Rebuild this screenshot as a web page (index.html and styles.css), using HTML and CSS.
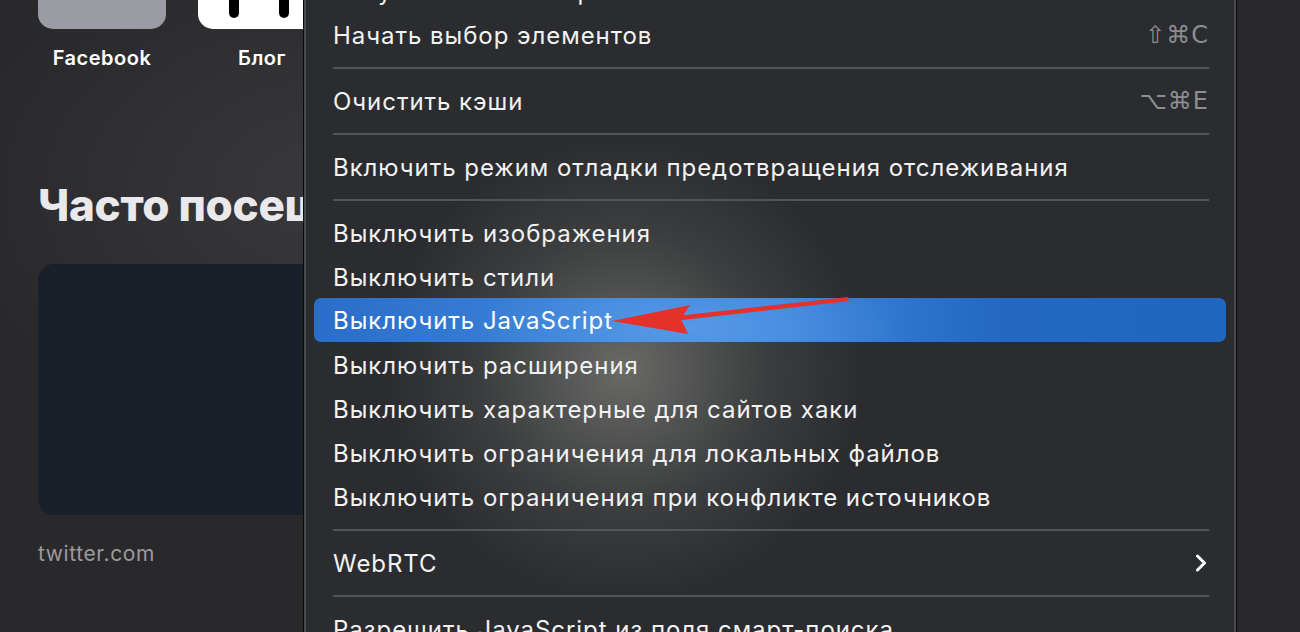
FILE: index.html
```html
<!DOCTYPE html>
<html lang="ru">
<head>
    <meta charset="UTF-8">
    <meta name="viewport" content="width=device-width, initial-scale=1.0">
    <title>Safari — Разработка</title>
    <link rel="stylesheet" href="styles.css">
</head>
<body>
    <main class="page">
        <div class="favorites">
            <div class="fav">
                <div class="tile tile-gray"></div>
                <div class="fav-label">Facebook</div>
            </div>
            <div class="fav">
                <div class="tile tile-white">
                    <span class="bar"></span>
                    <span class="bar"></span>
                </div>
                <div class="fav-label">Блог</div>
            </div>
        </div>

        <h1 class="section-title">Часто посещаемые</h1>

        <div class="frequent">
            <div class="site">
                <div class="site-card"></div>
                <div class="site-label">twitter.com</div>
            </div>
        </div>
    </main>

    <div class="menu">
        <div class="item">Запустить запись временной шкалы<span class="key">⌥⇧⌘T</span></div>
        <div class="item">Начать выбор элементов<span class="key">⇧⌘C</span></div>
        <div class="sep"></div>
        <div class="item">Очистить кэши<span class="key">⌥⌘E</span></div>
        <div class="sep"></div>
        <div class="item">Включить режим отладки предотвращения отслеживания</div>
        <div class="sep"></div>
        <div class="item">Выключить изображения</div>
        <div class="item">Выключить стили</div>
        <div class="item active">Выключить JavaScript</div>
        <div class="item">Выключить расширения</div>
        <div class="item">Выключить характерные для сайтов хаки</div>
        <div class="item">Выключить ограничения для локальных файлов</div>
        <div class="item">Выключить ограничения при конфликте источников</div>
        <div class="sep"></div>
        <div class="item">WebRTC
            <svg class="chevron" width="12" height="18" viewBox="0 0 12 18">
                <path d="M2.5 2 L9.5 9 L2.5 16" fill="none" stroke="#fff" stroke-width="3" stroke-linecap="round" stroke-linejoin="round"/>
            </svg>
        </div>
        <div class="sep"></div>
        <div class="item">Разрешить JavaScript из поля смарт-поиска</div>
    </div>

    <!-- annotation arrow drawn over the menu -->
    <svg class="arrow" width="260" height="50" viewBox="0 0 260 50">
        <path d="M238 2 L62 21.5 L64 26 L239 6 Z" fill="#e5312b"/>
        <path d="M2 26 L80 10 L71 24 L78 39 Z" fill="#e5312b"/>
    </svg>
</body>
</html>
```

FILE: styles.css
```css
html, body {
    margin: 0;
    height: 100%;
}

body {
    font-family: Inter, "Noto Sans", "DejaVu Sans", sans-serif;
    background:
        radial-gradient(ellipse 380px 260px at 330px 190px, rgba(70, 70, 74, 0.55), transparent),
        #29292c;
    color: #fff;
    overflow: hidden;
    position: relative;
}

.page {
    padding: 0 38px;
}

.favorites {
    display: flex;
    gap: 32px;
    margin-top: -100px;
}

.fav {
    width: 128px;
    display: flex;
    flex-direction: column;
    align-items: center;
}

.tile {
    width: 128px;
    height: 129px;
    border-radius: 15px;
}

.tile-gray {
    background: #9a9ba3;
}

.tile-white {
    background: #fff;
    display: flex;
    justify-content: center;
    gap: 40px;
    padding-right: 6px;
    box-sizing: border-box;
}

.bar {
    width: 10px;
    height: 118px;
    border-radius: 0 0 5px 5px;
    background: #000;
}

.fav-label {
    margin-top: 17px;
    font-size: 20px;
    font-weight: 600;
    letter-spacing: 0.5px;
}

.section-title {
    margin: 108px 0 0;
    width: 265px;
    overflow: hidden;
    font-size: 44px;
    font-weight: 800;
    color: #e9e9eb;
    letter-spacing: -0.3px;
    white-space: nowrap;
}

.frequent {
    margin-top: 32px;
    display: flex;
}

.site-card {
    width: 330px;
    height: 251px;
    border-radius: 16px;
    background: #19202a;
}

.site-label {
    margin-top: 26px;
    font-size: 21px;
    color: #9a9a9f;
    letter-spacing: 0.6px;
}

/* context menu */
.menu {
    position: absolute;
    left: 303px;
    top: -32px;
    width: 934px;
    height: 700px;
    padding: 0 10px;
    box-sizing: border-box;
    border: 1px solid #0a0a0b;
    box-shadow: inset 0 0 0 2px #4a4b4e;
    background:
        radial-gradient(ellipse 320px 310px at 320px 400px, rgba(125, 127, 122, 0.75), rgba(90, 92, 90, 0.35) 45%, transparent 75%),
        #2b2c2f;
    font-size: 24px;
    letter-spacing: 0.95px;
    color: #f2f2f3;
}

.item {
    height: 44px;
    padding: 0 17px 0 19px;
    display: flex;
    align-items: center;
    justify-content: space-between;
    border-radius: 7px;
    white-space: nowrap;
}

.item.active {
    margin: -1px 0 1px;
    background:
        radial-gradient(ellipse 220px 60px at 380px 30px, rgba(110, 170, 240, 0.5), transparent),
        linear-gradient(to right, #2a6dca, #3f88dc 35%, #3c85db 50%, #2369c4 75%, #1f66be);
    color: #fff;
}

.key {
    color: #8d8e91;
    font-family: "DejaVu Sans", sans-serif;
    font-size: 24px;
    letter-spacing: 1px;
}

.sep {
    height: 2px;
    margin: 10px 17px 10px 19px;
    background: #535457;
}

.chevron {
    margin-right: 2px;
}

.arrow {
    position: absolute;
    left: 610px;
    top: 295px;
}
```
